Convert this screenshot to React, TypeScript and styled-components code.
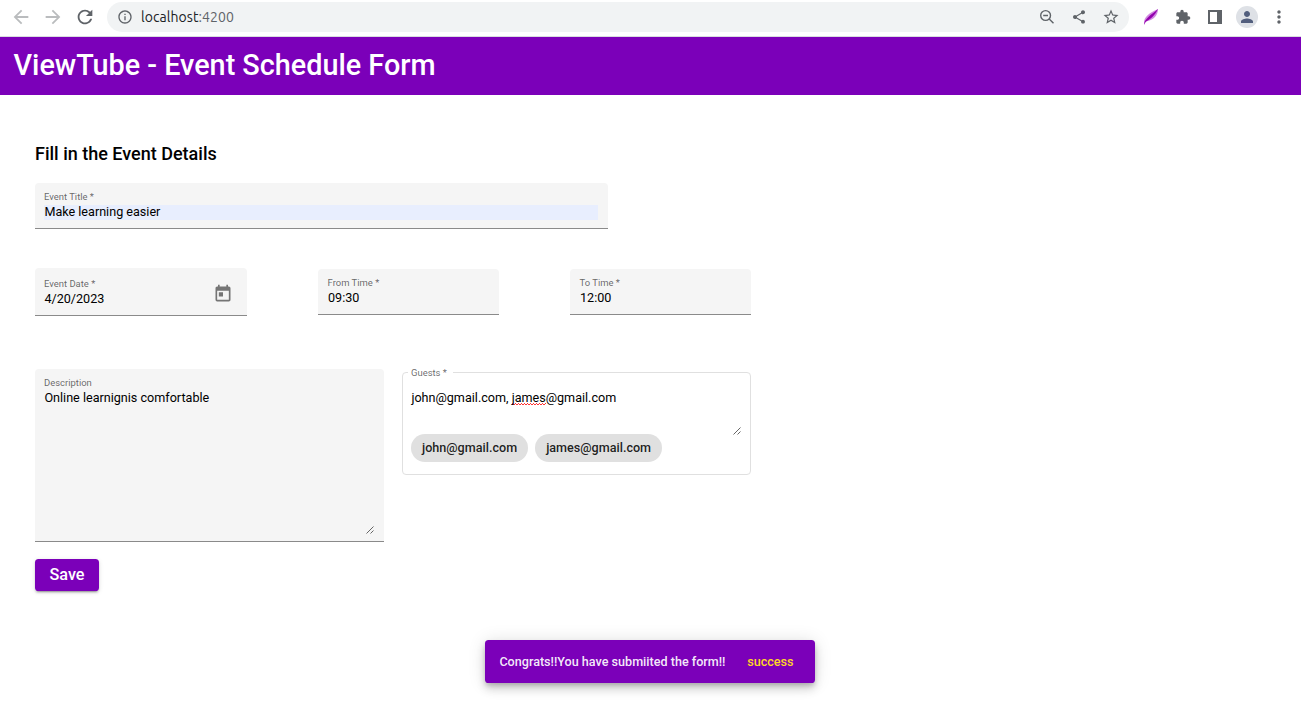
import React from 'react';
import styled, { createGlobalStyle, css } from 'styled-components';
import { MdArrowBack, MdArrowForward, MdRefresh, MdInfoOutline, MdShare, MdStarBorder, MdExtension, MdPerson, MdMoreVert, MdToday } from 'react-icons/md';

const purple = '#7b00b9';

const GlobalStyle = createGlobalStyle`
  * { box-sizing: border-box; }
  body { margin: 0; background: #fff; font-family: Roboto, sans-serif; color: #000; }
`;

const Page = styled.div`
  height: 705px;
  overflow: hidden;
`;

const BrowserBar = styled.div`
  height: 37px;
  display: flex;
  align-items: flex-start;
  padding: 2px 6px 0 5px;
  border-bottom: 1px solid #dadce0;
`;

const IconSlot = styled.span<{ $color?: string }>`
  width: 32px;
  height: 30px;
  flex: none;
  display: flex;
  align-items: center;
  justify-content: center;
  color: ${p => p.$color ?? '#5f6368'};
`;

const AddressBar = styled.div`
  width: 1022px;
  height: 30px;
  margin: 0 6px;
  padding: 0 2px 0 10px;
  display: flex;
  align-items: center;
  border-radius: 15px;
  background: #f1f3f4;
  color: #5f6368;
`;

const Url = styled.span`
  flex: 1;
  margin-left: 8px;
  font: 14px/30px Ubuntu, 'Noto Sans', sans-serif;
  letter-spacing: 0.06px;
  b { font-weight: 400; color: #202124; }
`;

const Avatar = styled.span`
  width: 22px;
  height: 22px;
  border-radius: 50%;
  display: flex;
  align-items: center;
  justify-content: center;
  background: #dee1e6;
  color: #525e7d;
`;

const AppHeader = styled.header`
  height: 58px;
  padding: 0 13.5px;
  background: ${purple};
  color: #fff;
  h1 { margin: 0; font-size: 28.8px; font-weight: 500; line-height: 57px; letter-spacing: -0.01px; }
`;

const Form = styled.main`
  padding: 45px 35px 0;
`;

const Heading = styled.h2`
  height: 14px;
  margin: 0 0 29px;
  font-size: 18px;
  line-height: 28px;
  font-weight: 500;
`;

const Row = styled.div<{ $top: number; $align?: string }>`
  display: flex;
  align-items: ${p => p.$align ?? 'center'};
  margin-top: ${p => p.$top}px;
`;

const Field = styled.div<{ $width: number; $height: number; $left?: number; $padTop?: number; $padLeft?: number }>`
  position: relative;
  width: ${p => p.$width}px;
  height: ${p => p.$height}px;
  margin-left: ${p => p.$left ?? 0}px;
  padding: ${p => p.$padTop ?? 7}px 10px 0 ${p => p.$padLeft ?? 9}px;
  border-radius: 4px 4px 0 0;
  background: #f5f5f5;
  border-bottom: 1px solid #8a8a8a;
`;

const Label = styled.div`
  height: 15px;
  font-size: 9.45px;
  line-height: 13px;
  color: rgba(0, 0, 0, 0.6);
`;

const Value = styled.div<{ $filled?: boolean }>`
  height: 15px;
  padding-left: 0.4px;
  font-size: 12.6px;
  line-height: 13px;
  color: #000;
  ${p => p.$filled && css`background: #e8eefe;`}
`;

const CalendarButton = styled.span`
  position: absolute;
  right: 14.5px;
  top: 15.5px;
  height: 20px;
  color: #757575;
  svg { display: block; }
`;

const Grip = styled.svg`
  position: absolute;
  right: 10px;
  bottom: 7px;
  width: 8px;
  height: 8px;
`;

const Guests = styled.div`
  position: relative;
  width: 349px;
  height: 103px;
  margin: 3px 0 0 18px;
  padding: 18px 8px 0;
  border: 1px solid #e0e0e0;
  border-radius: 4px;
`;

const FloatingLabel = styled(Label)`
  position: absolute;
  top: -7px;
  left: 5px;
  padding: 0 6px 0 3px;
  background: #fff;
`;

const Misspelled = styled.span`
  background:
    linear-gradient(90deg, #f33 50%, transparent 50%) 0 calc(100% - 1px) / 3px 1px repeat-x,
    linear-gradient(90deg, transparent 50%, #f33 50%) 0 100% / 3px 1px repeat-x;
`;

const Chips = styled.div`
  display: flex;
  gap: 7px;
  margin-top: 28px;
`;

const Chip = styled.span`
  height: 28px;
  padding: 0 11px;
  border-radius: 14px;
  background: #e0e0e0;
  color: rgba(0, 0, 0, 0.87);
  font-size: 12.6px;
  font-weight: 500;
  line-height: 28px;
`;

const SaveButton = styled.button`
  display: block;
  width: 64px;
  height: 32px;
  margin-top: 17px;
  padding: 0 0 1px;
  border: 0;
  border-radius: 3.6px;
  background: ${purple};
  color: #fff;
  font: 500 16.2px/30px Roboto, sans-serif;
  box-shadow: 0 3px 1px -2px rgba(0,0,0,.2), 0 2px 2px rgba(0,0,0,.14), 0 1px 5px rgba(0,0,0,.12);
`;

const Snackbar = styled.div`
  position: absolute;
  left: 485px;
  top: 640px;
  width: 330px;
  height: 43px;
  padding: 0 21.5px 0 14.4px;
  display: flex;
  align-items: center;
  justify-content: space-between;
  border-radius: 3.6px;
  background: ${purple};
  color: rgba(255, 255, 255, 0.93);
  font-size: 12.6px;
  font-weight: 500;
  box-shadow: 0 3px 5px -1px rgba(0,0,0,.2), 0 6px 10px rgba(0,0,0,.14), 0 1px 18px rgba(0,0,0,.12);
  span:last-child { color: #ffd726; }
`;

const ResizeGrip = ({ className }: { className?: string }) => (
  <Grip className={className} viewBox="0 0 8 8" fill="none" stroke="#555" strokeWidth="0.9">
    <path d="M.5 7.5l7-7M4.5 7.5l3-3" />
  </Grip>
);

const GuestGrip = styled(ResizeGrip)`
  bottom: 39px;
  right: 9px;
`;

const ZoomOut = () => (
  <svg width="16" height="16" viewBox="0 0 16 16" fill="none" stroke="currentColor" strokeWidth="1.4">
    <circle cx="6.6" cy="6.5" r="4.9" />
    <path d="M4.2 6.5h4.8M10.2 10l4.3 4.3" />
  </svg>
);

const Feather = () => (
  <svg width="16" height="18" viewBox="0 0 16 18">
    <path d="M1 15C1 9 6 5 15 1c0 6-4 11-12 12.5z" fill="#d08ae0" />
    <path d="M1 17C1 11 8 7 15 1 11.5 8.5 7 11 2.8 13.8z" fill="#9300ae" />
  </svg>
);

const SidePanel = () => (
  <svg width="14" height="14" viewBox="0 0 14 14">
    <path fill="currentColor" fillRule="evenodd" d="M0 0h14v14H0zM2 2v10h7V2z" />
  </svg>
);

export default function App() {
  return (
    <Page>
      <GlobalStyle />
      <BrowserBar>
        <IconSlot $color="#babcbe"><MdArrowBack size={22} /></IconSlot>
        <IconSlot $color="#babcbe"><MdArrowForward size={22} /></IconSlot>
        <IconSlot><MdRefresh size={22} /></IconSlot>
        <AddressBar>
          <MdInfoOutline size={16} />
          <Url><b>localhost</b>:4200</Url>
          <IconSlot><ZoomOut /></IconSlot>
          <IconSlot><MdShare size={16} /></IconSlot>
          <IconSlot><MdStarBorder size={18} /></IconSlot>
        </AddressBar>
        <IconSlot><Feather /></IconSlot>
        <IconSlot><MdExtension size={16} /></IconSlot>
        <IconSlot><SidePanel /></IconSlot>
        <IconSlot><Avatar><MdPerson size={18} /></Avatar></IconSlot>
        <IconSlot><MdMoreVert size={20} /></IconSlot>
      </BrowserBar>
      <AppHeader><h1>ViewTube - Event Schedule Form</h1></AppHeader>
      <Form>
        <Heading>Fill in the Event Details</Heading>
        <Field $width={573} $height={46}>
          <Label>Event Title *</Label>
          <Value $filled>Make learning easier</Value>
        </Field>
        <Row $top={39}>
          <Field $width={212} $height={48} $padTop={9}>
            <Label>Event Date *</Label>
            <Value>4/20/2023</Value>
            <CalendarButton><MdToday size={20} /></CalendarButton>
          </Field>
          <Field $width={181} $height={46} $left={71} $padLeft={9.6}>
            <Label>From Time *</Label>
            <Value>09:30</Value>
          </Field>
          <Field $width={181} $height={46} $left={71} $padLeft={9.6}>
            <Label>To Time *</Label>
            <Value>12:00</Value>
          </Field>
        </Row>
        <Row $top={53} $align="flex-start">
          <Field $width={349} $height={173}>
            <Label>Description</Label>
            <Value>Online learnignis comfortable</Value>
            <ResizeGrip />
          </Field>
          <Guests>
            <FloatingLabel>Guests *</FloatingLabel>
            <Value>john@gmail.com, <Misspelled>james</Misspelled>@gmail.com</Value>
            <GuestGrip />
            <Chips>
              <Chip>john@gmail.com</Chip>
              <Chip>james@gmail.com</Chip>
            </Chips>
          </Guests>
        </Row>
        <SaveButton>Save</SaveButton>
      </Form>
      <Snackbar>
        <span>Congrats!!You have submiited the form!!</span>
        <span>success</span>
      </Snackbar>
    </Page>
  );
}
